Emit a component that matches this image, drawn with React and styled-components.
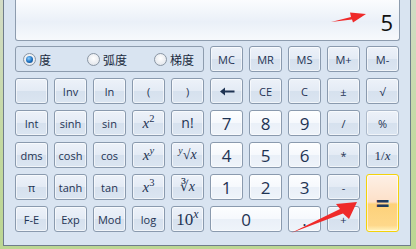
import styled, { createGlobalStyle, css } from "styled-components";

const GlobalStyle = createGlobalStyle`
  body {
    margin: 0;
    background: #c3d99f;
    overflow: hidden;
    font-family: "Open Sans", "Noto Sans", "Noto Sans CJK SC", sans-serif;
  }
`;

const Frame = styled.div`
  position: relative;
  width: 416px;
  height: 249px;
  box-sizing: border-box;
  display: flex;
  padding: 0 5px 3px 3px;
  background: linear-gradient(180deg, #d3dcc6 0%, #c3d99f 60%, #bcd692 100%);
`;

const Window = styled.div`
  flex: 1;
  display: flex;
  flex-direction: column;
  gap: 5px;
  box-sizing: border-box;
  padding: 0 10px 0 11px;
  border: 1px solid #6f7c8b;
  border-top: none;
  background: #d9e4f1;
`;

const Display = styled.div`
  height: 41px;
  box-sizing: border-box;
  border: 1px solid #8d9cae;
  border-top: none;
  border-radius: 0 0 3px 3px;
  background: linear-gradient(180deg, #fbfcfe 0%, #eaf0f8 55%, #f7f9fc 100%);
  display: flex;
  align-items: flex-end;
  justify-content: flex-end;
  padding: 0 6px 7px 0;
  font-family: "Open Sans", "Noto Sans", sans-serif;
  font-size: 22px;
  line-height: 1;
  color: #111;
`;

const Pad = styled.div`
  display: grid;
  grid-template-columns: repeat(10, 33px);
  grid-auto-rows: 26px;
  gap: 6px;
`;

const RadioGroup = styled.div`
  grid-column: span 5;
  box-sizing: border-box;
  border: 1px solid #8d9cae;
  border-radius: 3px;
  display: grid;
  grid-template-columns: 64px 67px 1fr;
  align-items: center;
  padding-left: 7px;
`;

const RadioItem = styled.label`
  display: flex;
  align-items: center;
  gap: 3px;
  font-family: "Noto Sans CJK SC", sans-serif;
  font-size: 12px;
  color: #1b2b40;
`;

const Dot = styled.span`
  width: 11px;
  height: 11px;
  border-radius: 50%;
  border: 1px solid #8a96a4;
  background: radial-gradient(circle at 50% 40%, #ffffff 0%, #e6e9ee 70%, #c9cfd6 100%);
  display: flex;
  align-items: center;
  justify-content: center;
  ${(p) =>
    p.$on &&
    css`
      &::after {
        content: "";
        width: 7px;
        height: 7px;
        border-radius: 50%;
        background: radial-gradient(circle at 40% 35%, #8fd0ff 0%, #1a6fbf 55%, #0d3f7a 100%);
      }
    `}
`;

const Key = styled.button`
  grid-column: span ${(p) => p.$w || 1};
  grid-row: span ${(p) => p.$h || 1};
  box-sizing: border-box;
  margin: 0;
  padding: 0;
  border: 1px solid ${(p) => (p.$dim ? "#adbacb" : "#8a9aae")};
  border-radius: 3px;
  background: linear-gradient(180deg, #edf2f9 0%, #e4ebf5 48%, #d6e1ee 52%, #dbe5f1 100%);
  box-shadow: inset 0 0 0 1px rgba(255, 255, 255, 0.6);
  font-family: "Open Sans", "Noto Sans", sans-serif;
  font-size: 11px;
  color: #1e3353;
  display: flex;
  align-items: center;
  justify-content: center;
  line-height: 1;

  ${(p) =>
    p.$num &&
    css`
      background: linear-gradient(180deg, #fdfeff 0%, #f6f9fd 48%, #eaf0f8 52%, #eff4fa 100%);
      font-size: 17px;
      color: #1e3353;
    `}

  ${(p) =>
    p.$eq &&
    css`
      border: 1px solid #f3d20b;
      background: linear-gradient(180deg, #fdf0e6 0%, #fde0c8 48%, #fdd17a 52%, #fed88a 90%, #fff3c0 100%);
      font-size: 24px;
      font-weight: 700;
      color: #1e3a5e;
    `}
`;

const Math = styled.span`
  font-family: "Liberation Serif", "DejaVu Serif", serif;
  font-style: italic;
  font-size: ${(p) => p.$size || 15}px;
  color: #1e3353;

  sup {
    font-size: 0.7em;
    vertical-align: 0.55em;
    line-height: 0;
  }
`;

const Upright = styled.span`
  font-style: normal;
`;

const Big = styled.span`
  font-size: 14px;
`;

const BackArrow = () => (
  <svg width="16" height="9" viewBox="0 0 16 9">
    <path d="M1 4.5 L6 0.5 L6 3.5 L15.5 3.5 L15.5 5.5 L6 5.5 L6 8.5 Z" fill="#1e3353" />
  </svg>
);

const Overlay = styled.svg`
  position: absolute;
  left: 0;
  top: 0;
  pointer-events: none;
`;

const rows = [
  [null, "Inv", "ln", "(", ")", "back", "CE", "C", "±", "√"],
  ["Int", "sinh", "sin", "x2", "n!", "7", "8", "9", "/", "%"],
  ["dms", "cosh", "cos", "xy", "yroot", "4", "5", "6", "*", "1/x"],
  ["π", "tanh", "tan", "x3", "croot", "1", "2", "3", "-", "="],
  ["F-E", "Exp", "Mod", "log", "10x", "0", ".", "+"],
];

function label(k) {
  switch (k) {
    case "back":
      return <BackArrow />;
    case "x2":
      return (
        <Math>
          x<sup><Upright>2</Upright></sup>
        </Math>
      );
    case "x3":
      return (
        <Math>
          x<sup><Upright>3</Upright></sup>
        </Math>
      );
    case "xy":
      return (
        <Math>
          x<sup>y</sup>
        </Math>
      );
    case "yroot":
      return (
        <Math $size={14}>
          <sup>y</sup>
          <Upright>√</Upright>x
        </Math>
      );
    case "croot":
      return (
        <Math $size={14}>
          <Upright>∛</Upright>x
        </Math>
      );
    case "1/x":
      return (
        <Math $size={13}>
          <Upright>1/</Upright>x
        </Math>
      );
    case "10x":
      return (
        <Math $size={17}>
          <Upright>10</Upright>
          <sup>x</sup>
        </Math>
      );
    case "n!":
      return <Big>n!</Big>;
    default:
      return k;
  }
}

const isNum = (k) => /^[0-9.]$/.test(k);

export default function App() {
  return (
    <>
      <GlobalStyle />
      <Frame>
        <Window>
          <Display>5</Display>
          <Pad>
            <RadioGroup>
              <RadioItem>
                <Dot $on />度
              </RadioItem>
              <RadioItem>
                <Dot />弧度
              </RadioItem>
              <RadioItem>
                <Dot />梯度
              </RadioItem>
            </RadioGroup>
            {["MC", "MR", "MS", "M+", "M-"].map((m) => (
              <Key key={m}>{m}</Key>
            ))}
            {rows.map((row, ri) =>
              row.map((k, ci) => (
                <Key
                  key={`${ri}-${ci}`}
                  $num={k && isNum(k)}
                  $w={k === "0" ? 2 : 1}
                  $h={k === "=" ? 2 : 1}
                  $eq={k === "="}
                  $dim={k === "%"}
                >
                  {k ? label(k) : ""}
                </Key>
              ))
            )}
          </Pad>
        </Window>
        <Overlay width="416" height="249" viewBox="0 0 416 249">
          <polygon
            points="331,22 351,17 350,12.5 366,14 353,22.5 352,19.5"
            fill="#ef2a2a"
          />
          <polygon
            points="291,233 340,209 336,204 357,202 349,219 343,213.5"
            fill="#ef2a2a"
          />
        </Overlay>
      </Frame>
    </>
  );
}
